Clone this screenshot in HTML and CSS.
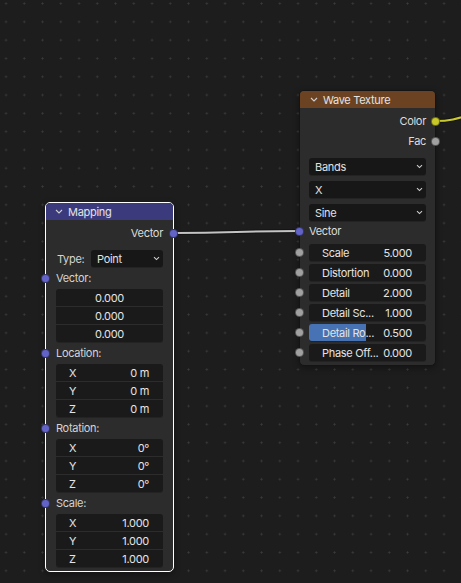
FILE: index.html
```html
<!DOCTYPE html>
<html lang="en">
<head>
    <meta charset="UTF-8">
    <meta name="viewport" content="width=device-width, initial-scale=1.0">
    <title>Shader Editor - Mapping to Wave Texture</title>
    <link rel="stylesheet" href="styles.css">
</head>
<body>
    <div class="editor">
        <!-- links are drawn under the nodes -->
        <svg class="links" width="461" height="583" viewBox="0 0 461 583">
            <path class="link-edge" d="M173.5 233 C 236 233, 237 231, 299.5 231"/>
            <path class="link link-vector" d="M173.5 233 C 236 233, 237 231, 299.5 231"/>
            <path class="link-edge" d="M435.5 121 C 450 121, 456 119, 476 113"/>
            <path class="link link-color" d="M435.5 121 C 450 121, 456 119, 476 113"/>
        </svg>

        <div class="node node-mapping selected">
            <div class="node-header">
                <svg class="chevron" width="8" height="5" viewBox="0 0 8 5"><path d="M1 1 L4 4 L7 1"/></svg>
                <span>Mapping</span>
            </div>
            <div class="node-body">
                <div class="socket-row output">
                    <span>Vector</span>
                    <i class="socket vector"></i>
                </div>
                <div class="prop-row">
                    <span class="prop-label">Type:</span>
                    <div class="dropdown">
                        <span>Point</span>
                        <svg class="drop-arrow" width="7" height="5" viewBox="0 0 7 5"><path d="M1 1.2 L3.5 3.6 L6 1.2"/></svg>
                    </div>
                </div>

                <div class="socket-row input label-row">
                    <i class="socket vector"></i>
                    <span>Vector:</span>
                </div>
                <div class="field-group">
                    <div class="field center">0.000</div>
                    <div class="field center">0.000</div>
                    <div class="field center">0.000</div>
                </div>

                <div class="socket-row input label-row">
                    <i class="socket vector"></i>
                    <span>Location:</span>
                </div>
                <div class="field-group">
                    <div class="field"><span class="axis">X</span><span>0 m</span></div>
                    <div class="field"><span class="axis">Y</span><span>0 m</span></div>
                    <div class="field"><span class="axis">Z</span><span>0 m</span></div>
                </div>

                <div class="socket-row input label-row">
                    <i class="socket vector"></i>
                    <span>Rotation:</span>
                </div>
                <div class="field-group">
                    <div class="field"><span class="axis">X</span><span>0°</span></div>
                    <div class="field"><span class="axis">Y</span><span>0°</span></div>
                    <div class="field"><span class="axis">Z</span><span>0°</span></div>
                </div>

                <div class="socket-row input label-row">
                    <i class="socket vector"></i>
                    <span>Scale:</span>
                </div>
                <div class="field-group">
                    <div class="field"><span class="axis">X</span><span>1.000</span></div>
                    <div class="field"><span class="axis">Y</span><span>1.000</span></div>
                    <div class="field"><span class="axis">Z</span><span>1.000</span></div>
                </div>
            </div>
        </div>

        <div class="node node-wave">
            <div class="node-header">
                <svg class="chevron" width="8" height="5" viewBox="0 0 8 5"><path d="M1 1 L4 4 L7 1"/></svg>
                <span>Wave Texture</span>
            </div>
            <div class="node-body">
                <div class="socket-row output">
                    <span>Color</span>
                    <i class="socket color"></i>
                </div>
                <div class="socket-row output">
                    <span>Fac</span>
                    <i class="socket float"></i>
                </div>

                <div class="dropdown-stack">
                    <div class="dropdown">
                        <span>Bands</span>
                        <svg class="drop-arrow" width="7" height="5" viewBox="0 0 7 5"><path d="M1 1.2 L3.5 3.6 L6 1.2"/></svg>
                    </div>
                    <div class="dropdown">
                        <span>X</span>
                        <svg class="drop-arrow" width="7" height="5" viewBox="0 0 7 5"><path d="M1 1.2 L3.5 3.6 L6 1.2"/></svg>
                    </div>
                    <div class="dropdown">
                        <span>Sine</span>
                        <svg class="drop-arrow" width="7" height="5" viewBox="0 0 7 5"><path d="M1 1.2 L3.5 3.6 L6 1.2"/></svg>
                    </div>
                </div>

                <div class="socket-row input">
                    <i class="socket vector"></i>
                    <span>Vector</span>
                </div>

                <div class="field-list">
                    <div class="field"><i class="socket float"></i><span>Scale</span><span>5.000</span></div>
                    <div class="field"><i class="socket float"></i><span>Distortion</span><span>0.000</span></div>
                    <div class="field"><i class="socket float"></i><span>Detail</span><span>2.000</span></div>
                    <div class="field"><i class="socket float"></i><span>Detail Sc...</span><span>1.000</span></div>
                    <div class="field slider" style="--fill: 48.7%"><i class="socket float"></i><span>Detail Ro...</span><span>0.500</span></div>
                    <div class="field"><i class="socket float"></i><span>Phase Off...</span><span>0.000</span></div>
                </div>
            </div>
        </div>
    </div>
</body>
</html>
```

FILE: styles.css
```css
body {
    margin: 0;
    background: #1d1d1d;
    font-family: Inter, "Noto Sans", sans-serif;
    font-size: 11px;
    letter-spacing: -0.3px;
    color: #dcdcdc;
}
.editor {
    position: relative;
    width: 461px;
    height: 583px;
    overflow: hidden;
    background-color: #1d1d1d;
    background-image: radial-gradient(circle, #3a3a3a 0.8px, transparent 1.3px);
    background-size: 18.25px 18.3px;
    background-position: -3.1px -5.6px;
}

/* links */
.links {
    position: absolute;
    left: 0;
    top: 0;
}
.links path {
    fill: none;
    stroke-linecap: round;
}
.link-edge {
    stroke: #141414;
    stroke-width: 4;
}
.link {
    stroke-width: 2;
}
.link-vector {
    stroke: #c4c4c4;
}
.link-color {
    stroke: #c9c92e;
}

/* nodes */
.node {
    --pad: 10px;
    position: absolute;
    box-sizing: border-box;
    border: 1px solid #141414;
    border-radius: 5px;
    background: #2c2c2c;
    box-shadow: 0 2px 6px rgba(0, 0, 0, 0.35);
}
.node.selected {
    border-color: #ffffff;
}
.node-mapping {
    left: 45px;
    top: 202px;
    width: 129px;
}
.node-wave {
    --pad: 9px;
    left: 299px;
    top: 90px;
    width: 137px;
}
.node-header {
    height: 17px;
    display: flex;
    align-items: center;
    gap: 5px;
    padding: 0 9px;
    border-radius: 4px 4px 0 0;
    color: #e4e4e4;
}
.node-mapping .node-header {
    background: #3b3a7c;
}
.node-wave .node-header {
    background: #6c4322;
    padding-left: 10px;
}
.chevron path,
.drop-arrow path {
    fill: none;
    stroke: #cfcfcf;
    stroke-width: 1.1;
}
.node-body {
    display: flex;
    flex-direction: column;
    padding: 3px var(--pad) 4px;
}

/* sockets */
.socket {
    position: absolute;
    top: 50%;
    width: 9px;
    height: 9px;
    margin-top: -4.5px;
    box-sizing: border-box;
    border-radius: 50%;
    border: 1px solid rgba(0, 0, 0, 0.45);
}
.socket.vector { background: #6363c7; }
.socket.float { background: #a1a1a1; }
.socket.color { background: #c7c729; }

.socket-row {
    position: relative;
    height: 20px;
    display: flex;
    align-items: center;
}
.socket-row.output {
    justify-content: flex-end;
}
.socket-row.output .socket {
    right: calc(-1 * var(--pad) - 5px);
}
.socket-row.input .socket,
.field .socket {
    left: calc(-1 * var(--pad) - 5px);
}
.socket-row.label-row {
    height: 22px;
    color: #d4d4d4;
}

/* property rows */
.prop-row {
    display: flex;
    align-items: center;
    margin-top: 7px;
}
.prop-label {
    flex: 1;
    padding-left: 1px;
    color: #d4d4d4;
}
.prop-row .dropdown {
    width: 72px;
}
.dropdown {
    height: 17px;
    display: flex;
    align-items: center;
    justify-content: space-between;
    padding: 0 3px 0 6px;
    box-sizing: border-box;
    border-radius: 3px;
    background: #171717;
    color: #e2e2e2;
    box-shadow: 0 1px 0 #232323;
}
.dropdown-stack {
    display: flex;
    flex-direction: column;
    gap: 6px;
    margin-top: 7px;
}

/* number fields */
.field-group {
    display: flex;
    flex-direction: column;
    gap: 1px;
    border-radius: 3px;
    overflow: hidden;
    box-shadow: 0 1px 0 #232323;
}
.field {
    position: relative;
    height: 17px;
    display: flex;
    align-items: center;
    justify-content: space-between;
    padding: 0 14px 0 13px;
    background: #1a1a1a;
    color: #e4e4e4;
}
.field.center {
    justify-content: center;
    padding: 0;
}
.field .axis {
    padding-left: 0;
}
.field-list {
    display: flex;
    flex-direction: column;
    gap: 3px;
    margin-top: 3px;
}
.field-list .field {
    border-radius: 3px;
    box-shadow: 0 1px 0 #232323;
}
.field.slider {
    background: linear-gradient(to right, #4772b3 0, #4772b3 var(--fill), #1a1a1a var(--fill));
}
```
